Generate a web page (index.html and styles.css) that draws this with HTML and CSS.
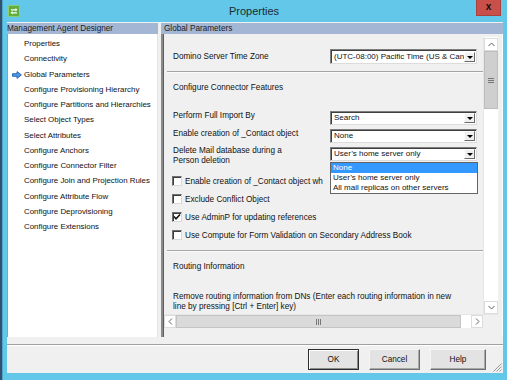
FILE: index.html
```html
<!DOCTYPE html>
<html>
<head>
<meta charset="utf-8">
<link rel="stylesheet" href="styles.css">
</head>
<body>
<div class="window">
  <div class="titlebar">
    <div class="tb-left">
      <svg class="app-icon" width="12" height="12" viewBox="0 0 12 12">
        <rect x="0.5" y="0.5" width="11" height="11" rx="1" fill="#5fae3e" stroke="#8fcf6a"/>
        <path d="M3 4.2 H7.5 V3 L9.5 4.8 L7.5 6.6 V5.4 H3 Z" fill="#ffffff"/>
        <path d="M9 7.2 H4.5 V6 L2.5 7.8 L4.5 9.6 V8.4 H9 Z" fill="#ffffff"/>
      </svg>
    </div>
    <div class="title">Properties</div>
    <div class="tb-right">
      <div class="close">x</div>
    </div>
  </div>
  <div class="client">
    <div class="main">
      <div class="left">
        <div class="hdr">Management Agent Designer</div>
        <ul class="nav">
          <li>Properties</li>
          <li>Connectivity</li>
          <li class="current">
            <svg class="cur-arrow" width="10" height="8" viewBox="0 0 10 8">
              <path d="M0.5 2.7 H5 V0.6 L9.4 4 L5 7.4 V5.3 H0.5 Z" fill="#4f9be8" stroke="#1f5fae" stroke-width="0.9" stroke-linejoin="round"/>
            </svg>Global Parameters</li>
          <li>Configure Provisioning Hierarchy</li>
          <li>Configure Partitions and Hierarchies</li>
          <li>Select Object Types</li>
          <li>Select Attributes</li>
          <li>Configure Anchors</li>
          <li>Configure Connector Filter</li>
          <li>Configure Join and Projection Rules</li>
          <li>Configure Attribute Flow</li>
          <li>Configure Deprovisioning</li>
          <li>Configure Extensions</li>
        </ul>
      </div>
      <div class="right">
        <div class="hdr hdr-right">Global Parameters</div>
        <div class="panel">
          <div class="scroll-row">
            <div class="content">
              <div class="row row-first">
                <div class="label">Domino Server Time Zone</div>
                <div class="combo combo-tall"><span class="combo-text">(UTC-08:00) Pacific Time (US &amp; Can</span><span class="drop-btn"></span></div>
              </div>
              <div class="sep sep-1"></div>
              <div class="section-title">Configure Connector Features</div>
              <div class="row row-a">
                <div class="label">Perform Full Import By</div>
                <div class="combo"><span class="combo-text">Search</span><span class="drop-btn"></span></div>
              </div>
              <div class="row row-b">
                <div class="label">Enable creation of _Contact object</div>
                <div class="combo"><span class="combo-text">None</span><span class="drop-btn"></span></div>
              </div>
              <div class="row row-b">
                <div class="label label-2">Delete Mail database during a<br>Person deletion</div>
                <div class="combo-wrap">
                  <div class="combo"><span class="combo-text">User’s home server only</span><span class="drop-btn"></span></div>
                  <ul class="dropdown">
                    <li class="sel">None</li>
                    <li>User’s home server only</li>
                    <li>All mail replicas on other servers</li>
                  </ul>
                </div>
              </div>
              <div class="check-row check-first"><span class="cb"></span><span class="cb-text">Enable creation of _Contact object wh</span></div>
              <div class="check-row"><span class="cb"></span><span class="cb-text">Exclude Conflict Object</span></div>
              <div class="check-row"><span class="cb"><svg width="8" height="8" viewBox="0 0 8 8"><path d="M1 3.6 L3 5.8 L7 1.4" fill="none" stroke="#111" stroke-width="1.5"/></svg></span><span class="cb-text">Use AdminP for updating references</span></div>
              <div class="check-row"><span class="cb"></span><span class="cb-text">Use Compute for Form Validation on Secondary Address Book</span></div>
              <div class="sep sep-2"></div>
              <div class="section-title section-2">Routing Information</div>
              <div class="para">Remove routing information from DNs (Enter each routing information in new<br>line by pressing [Ctrl + Enter] key)</div>
            </div>
            <div class="vscroll">
              <div class="sb-btn"><svg width="7" height="5" viewBox="0 0 7 5"><path d="M0.5 4 L3.5 1 L6.5 4" fill="none" stroke="#606060" stroke-width="1"/></svg></div>
              <div class="v-thumb"><span class="grip-h"></span></div>
              <div class="v-track"></div>
              <div class="sb-btn"><svg width="7" height="5" viewBox="0 0 7 5"><path d="M0.5 1 L3.5 4 L6.5 1" fill="none" stroke="#606060" stroke-width="1"/></svg></div>
            </div>
          </div>
          <div class="hscroll">
            <div class="sb-btn-h"><svg width="5" height="7" viewBox="0 0 5 7"><path d="M4 0.5 L1 3.5 L4 6.5" fill="none" stroke="#606060" stroke-width="1"/></svg></div>
            <div class="h-thumb"><span class="grip-v"></span></div>
            <div class="h-track"></div>
            <div class="sb-btn-h"><svg width="5" height="7" viewBox="0 0 5 7"><path d="M1 0.5 L4 3.5 L1 6.5" fill="none" stroke="#606060" stroke-width="1"/></svg></div>
            <div class="corner"></div>
          </div>
        </div>
      </div>
    </div>
    <div class="footer">
      <div class="buttons">
        <button class="btn btn-default">OK</button>
        <button class="btn">Cancel</button>
        <button class="btn btn-help">Help</button>
      </div>
      <svg class="grip" width="10" height="10" viewBox="0 0 10 10">
        <path d="M9.5 1.5 L1.5 9.5 M9.5 4.5 L4.5 9.5 M9.5 7.5 L7.5 9.5" stroke="#9a9a9a" stroke-width="1"/>
      </svg>
    </div>
  </div>
</div>
</body>
</html>
```

FILE: styles.css
```css
* { box-sizing: border-box; }
html, body { margin: 0; padding: 0; }
body {
  background: #34506c;
  font-family: "Liberation Sans", Arial, sans-serif;
  font-size: 8.2px;
  color: #111;
  overflow: hidden;
  width: 507px;
  height: 380px;
}
.window {
  margin-left: 2px;
  width: 505px;
  height: 380px;
  background: #63c7e9;
  display: flex;
  flex-direction: column;
  border-left: 1px solid #4aa8cc;
}
.titlebar {
  height: 22px;
  flex: none;
  display: grid;
  grid-template-columns: 1fr auto 1fr;
  align-items: start;
}
.tb-left { padding: 5px 0 0 5px; }
.app-icon { display: block; }
.title {
  font-size: 11px;
  line-height: 22px;
  color: #1b2b33;
  padding-right: 2px;
}
.tb-right { display: flex; justify-content: flex-end; padding-right: 6px; }
.close {
  width: 25px;
  height: 16px;
  background: #c9504a;
  border: 1px solid #a9413c;
  border-top: none;
  color: #111;
  font-weight: bold;
  font-size: 10px;
  line-height: 14px;
  text-align: center;
}
.client {
  flex: 1;
  margin: 0 4px 7px 4px;
  background: #f0f0f0;
  display: flex;
  flex-direction: column;
}
.main {
  display: flex;
  gap: 3px;
  padding-top: 1px;
  height: 315px;
  flex: none;
}
.left {
  width: 151px;
  flex: none;
  display: flex;
  flex-direction: column;
}
.right {
  flex: 1;
  min-width: 0;
  display: flex;
  flex-direction: column;
}
.hdr {
  height: 11px;
  background: #a3b6d3;
  color: #1c1c1c;
  line-height: 11px;
  padding-left: 0;
  white-space: nowrap;
  flex: none;
}
.hdr-right { padding-left: 3px; }
.nav {
  list-style: none;
  margin: 0;
  padding: 2px 0 0 0;
  flex: 1;
  background: #fff;
  border-left: 1px solid #9c9c9c;
  border-right: 1px solid #e2e2e2;
  font-size: 7.9px;
}
.nav li {
  height: 15.25px;
  line-height: 15.25px;
  padding-left: 16px;
  white-space: nowrap;
  position: relative;
}
.cur-arrow {
  position: absolute;
  left: 4px;
  top: 4px;
}
.panel {
  flex: 1;
  display: flex;
  flex-direction: column;
  border-left: 2px solid #8a8a8a;
  box-shadow: inset 1px 0 0 #5e5e5e;
  border-right: 1px solid #fafafa;
  padding: 3px 4px 0 1px;
}
.scroll-row {
  height: 277px;
  display: flex;
  flex: none;
}
.content {
  flex: 1;
  min-width: 0;
  overflow: hidden;
  padding: 12px 0 0 9px;
  position: relative;
}
.row {
  display: flex;
  align-items: flex-start;
}
.row-first { align-items: center; }
.row-a { margin-top: 18px; }
.row-b { margin-top: 4px; }
.label {
  width: 157px;
  flex: none;
  line-height: 9px;
  white-space: nowrap;
}
.label-2 { line-height: 10px; margin-top: -1px; }
.row-first .label { line-height: 10px; }
.combo {
  width: 147px;
  height: 14px;
  background: #fff;
  border: 1px solid;
  border-color: #7d7d7d #dcdcdc #dcdcdc #7d7d7d;
  box-shadow: inset 1px 1px 0 #3f3f3f;
  display: flex;
  align-items: center;
  padding: 0 1px 0 3px;
  overflow: hidden;
}
.combo-tall { height: 15px; }
.combo-text {
  flex: 1;
  white-space: nowrap;
  overflow: hidden;
  line-height: 10px;
  font-size: 8px;
}
.drop-btn {
  flex: none;
  width: 11px;
  height: 10px;
  background: #f0f0f0;
  border: 1px solid;
  border-color: #fdfdfd #6a6a6a #6a6a6a #fdfdfd;
  position: relative;
}
.drop-btn::after {
  content: "";
  position: absolute;
  left: 2px;
  top: 3px;
  border-left: 3px solid transparent;
  border-right: 3px solid transparent;
  border-top: 3px solid #000;
}
.combo-wrap { position: relative; }
.dropdown {
  position: absolute;
  left: 0;
  top: 15px;
  width: 148px;
  margin: 0;
  padding: 0;
  list-style: none;
  background: #fff;
  border: 1px solid #646464;
  z-index: 5;
  font-size: 8px;
}
.dropdown li {
  height: 10px;
  line-height: 10px;
  padding-left: 2px;
  white-space: nowrap;
}
.dropdown li.sel { background: #3399ff; color: #fff; }
.sep {
  height: 1px;
  background: #a5a5a5;
  margin-left: -6px;
  margin-right: -2px;
  box-shadow: 0 1px 0 #fbfbfb;
}
.sep-1 { margin-top: 7px; }
.sep-2 { margin-top: 8px; }
.section-title {
  line-height: 10px;
  margin-top: 11px;
  white-space: nowrap;
}
.section-2 { margin-top: 11px; }
.check-row {
  display: flex;
  align-items: center;
  height: 14px;
  margin-top: 4px;
  margin-left: -1px;
  white-space: nowrap;
}
.check-first { margin-top: 8px; }
.cb {
  width: 10px;
  height: 10px;
  flex: none;
  background: #fff;
  border: 1px solid;
  border-color: #6f6f6f #d8d8d8 #d8d8d8 #6f6f6f;
  box-shadow: inset 1px 1px 0 #3c3c3c;
  margin-right: 3px;
  display: flex;
  align-items: center;
  justify-content: center;
}
.para {
  margin-top: 20px;
  line-height: 9.5px;
  white-space: nowrap;
}
.vscroll {
  width: 15px;
  flex: none;
  display: flex;
  flex-direction: column;
  background: #fff;
  border-left: 1px solid #e6e6e6;
  padding-top: 1px;
}
.sb-btn {
  height: 13px;
  flex: none;
  border: 1px solid #dcdcdc;
  background: #fff;
  display: flex;
  align-items: center;
  justify-content: center;
}
.v-thumb {
  height: 58px;
  flex: none;
  background: #cfcfcf;
  border: 1px solid #bdbdbd;
  display: flex;
  align-items: center;
  justify-content: center;
}
.grip-h {
  width: 6px;
  height: 5px;
  border-top: 1px solid #777;
  border-bottom: 1px solid #777;
  position: relative;
}
.grip-h::after {
  content: "";
  position: absolute;
  left: 0;
  right: 0;
  top: 1px;
  height: 1px;
  background: #777;
}
.v-track { flex: 1; background: #fff; }
.hscroll {
  height: 14px;
  flex: none;
  display: flex;
  background: #fff;
  border-top: 1px solid #e6e6e6;
}
.sb-btn-h {
  width: 12px;
  flex: none;
  border: 1px solid #dcdcdc;
  background: #fff;
  display: flex;
  align-items: center;
  justify-content: center;
}
.h-thumb {
  width: 285px;
  flex: none;
  background: #dadada;
  border: 1px solid #c4c4c4;
  display: flex;
  align-items: center;
  justify-content: center;
}
.grip-v {
  width: 5px;
  height: 6px;
  border-left: 1px solid #777;
  border-right: 1px solid #777;
  position: relative;
}
.grip-v::after {
  content: "";
  position: absolute;
  top: 0;
  bottom: 0;
  left: 1px;
  width: 1px;
  background: #777;
}
.h-track { flex: 1; background: #fff; }
.corner { width: 15px; flex: none; background: #f0f0f0; }
.footer {
  flex: 1;
  border-top: 1px solid #a0a0a0;
  box-shadow: inset 0 1px 0 #ffffff;
  margin-top: 7px;
  display: flex;
  align-items: flex-start;
  position: relative;
  padding-top: 4px;
}
.buttons {
  display: flex;
  gap: 10px;
  margin-left: 301px;
}
.btn {
  width: 51px;
  height: 21px;
  font-family: inherit;
  font-size: 8.2px;
  color: #111;
  background: #e3e3e3;
  border: 1px solid;
  border-color: #f6f6f6 #6d6d6d #6d6d6d #f6f6f6;
  box-shadow: inset -1px -1px 0 #a8a8a8;
  padding: 0;
}
.btn-default { border: 1px solid #2d2d2d; box-shadow: inset 1px 1px 0 #fff, inset -1px -1px 0 #8a8a8a; }
.btn-help { width: 56px; }
.grip {
  position: absolute;
  right: 1px;
  bottom: 1px;
}
```
